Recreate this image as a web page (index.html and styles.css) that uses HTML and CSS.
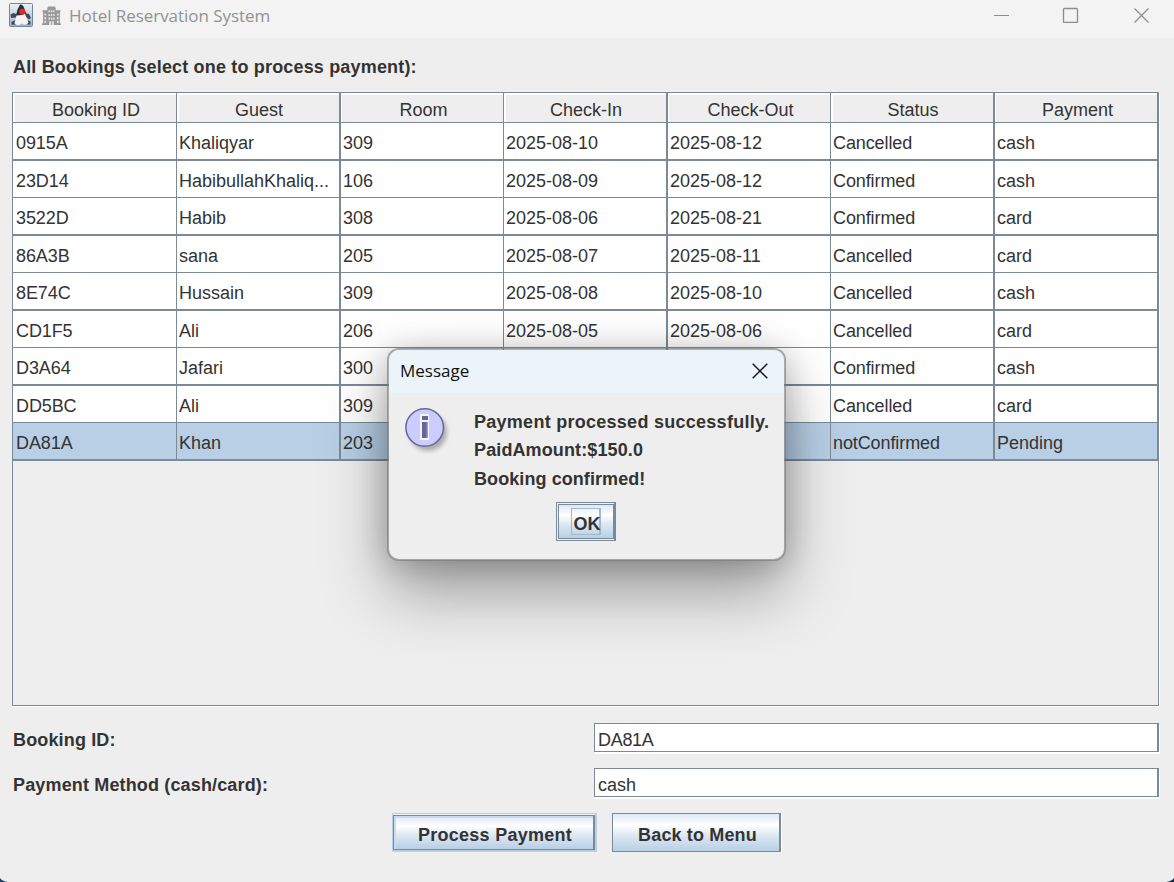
FILE: index.html
```html
<!DOCTYPE html>
<html lang="en">
<head>
<meta charset="utf-8">
<title>Hotel Reservation System</title>
<link rel="stylesheet" href="styles.css">
</head>
<body>
<div class="window">
  <header class="titlebar">
    <svg class="java-icon" viewBox="0 0 24 24">
      <defs><linearGradient id="jg" x1="0" y1="0" x2="0" y2="1"><stop offset="0" stop-color="#eef2f6"/><stop offset="1" stop-color="#9db2c8"/></linearGradient></defs>
      <rect x=".5" y=".5" width="23" height="23" rx="1" fill="url(#jg)" stroke="#7088a3"/>
      <path d="M1.500 11.500l3-1.500 4 1.500-1.500 3-5 .5zM16 10l4 1 2 4-2 1.500-4-3zM2.500 19l4-2 1 4.500-5 .3zM18 17l3.500 1.500v3h-4z" fill="#3d4a59"/>
      <path d="M8 11q4-2.500 8 0l3.500 8.500q-1 2.300-4.500 2.300l-2-1.300-3 1.500q-4 0-4.500-2z" fill="#f3f3f3"/>
      <path d="M11 1.500q2-.5 3.500 2L17 10l-4 2-6 .5q1-6 4-11z" fill="#2a2d33"/>
      <circle cx="13.200" cy="8.800" r="3" fill="#e6261f"/>
    </svg>
    <svg class="hotel-icon" viewBox="0 0 18 18">
      <path d="M6 .5h6l1 1.500v2h4.500v2H17v10.500h1V18H0v-1.500h1V6H.5V4H5V2z" fill="#999"/>
      <path d="M6.200 4h1.300v2H6.200zM8.400 4h1.300v2H8.400zM10.600 4h1.300v2h-1.300zM6.200 7.500h1.300v2H6.200zM8.400 7.500h1.300v2H8.400zM10.600 7.500h1.300v2h-1.300zM6.200 11h1.300v2H6.200zM8.400 11h1.300v2H8.400zM10.600 11h1.300v2h-1.300zM2.300 7h1.500v2H2.300zM2.300 10.500h1.500v2H2.300zM2.300 14h1.500v2H2.300zM14.200 7h1.500v2h-1.500zM14.200 10.500h1.500v2h-1.500zM14.200 14h1.500v2h-1.500zM6.800 14.500h1.800V18H6.800zM9.400 14.500h1.800V18H9.400z" fill="#e6e6e6"/>
    </svg>
    <span class="title">Hotel Reservation System</span>
    <svg class="controls" viewBox="0 0 156 16" fill="none" stroke="#8c8c8c">
      <path d="M0 8.500h15"/><rect x="69.500" y="1.500" width="14" height="14" rx="1" stroke-width="1.300"/><path d="M140.500 1.500l14 14M154.500 1.500l-14 14" stroke-width="1.200"/>
    </svg>
  </header>
  <main class="content">
    <h1 class="heading">All Bookings (select one to process payment):</h1>
    <section class="scroll">
      <table class="table">
        <colgroup><col class="c164"><col class="c164"><col class="c163"><col class="c164"><col class="c163"><col class="c164"><col class="c164"></colgroup>
        <thead><tr><th>Booking ID</th><th>Guest</th><th>Room</th><th>Check-In</th><th>Check-Out</th><th>Status</th><th>Payment</th></tr></thead>
        <tbody>
          <tr><td>0915A</td><td>Khaliqyar</td><td>309</td><td>2025-08-10</td><td>2025-08-12</td><td>Cancelled</td><td>cash</td></tr>
          <tr><td>23D14</td><td>HabibullahKhaliq...</td><td>106</td><td>2025-08-09</td><td>2025-08-12</td><td>Confirmed</td><td>cash</td></tr>
          <tr><td>3522D</td><td>Habib</td><td>308</td><td>2025-08-06</td><td>2025-08-21</td><td>Confirmed</td><td>card</td></tr>
          <tr><td>86A3B</td><td>sana</td><td>205</td><td>2025-08-07</td><td>2025-08-11</td><td>Cancelled</td><td>card</td></tr>
          <tr><td>8E74C</td><td>Hussain</td><td>309</td><td>2025-08-08</td><td>2025-08-10</td><td>Cancelled</td><td>cash</td></tr>
          <tr><td>CD1F5</td><td>Ali</td><td>206</td><td>2025-08-05</td><td>2025-08-06</td><td>Cancelled</td><td>card</td></tr>
          <tr><td>D3A64</td><td>Jafari</td><td>300</td><td></td><td></td><td>Confirmed</td><td>cash</td></tr>
          <tr><td>DD5BC</td><td>Ali</td><td>309</td><td></td><td></td><td>Cancelled</td><td>card</td></tr>
          <tr class="selected"><td>DA81A</td><td>Khan</td><td>203</td><td></td><td></td><td>notConfirmed</td><td>Pending</td></tr>
        </tbody>
      </table>
    </section>
    <form class="form">
      <label for="bid">Booking ID:</label><input id="bid" class="field" value="DA81A">
      <label for="method">Payment Method (cash/card):</label><input id="method" class="field" value="cash">
    </form>
    <div class="actions">
      <button class="btn primary"><span>Process Payment</span></button>
      <button class="btn back">Back to Menu</button>
    </div>
  </main>
  <svg class="corner left" viewBox="0 0 8 4"><path d="M0 0Q2 3 8 4H0z" fill="#24456b"/></svg>
  <svg class="corner right" viewBox="0 0 8 4"><path d="M8 0Q6 3 0 4h8z" fill="#1b2c4b"/></svg>
  <section class="dialog">
    <header class="dialog-bar"><span>Message</span>
      <svg class="close" viewBox="0 0 16 16"><path d="M.7.7l14.600 14.600M15.300.7L.7 15.300" stroke="#111" stroke-width="1.400"/></svg>
    </header>
    <div class="dialog-body">
      <svg class="info" viewBox="0 0 48 48">
        <defs><filter id="sh" x="-30%" y="-30%" width="160%" height="160%"><feGaussianBlur stdDeviation="2"/></filter></defs>
        <circle cx="23" cy="24" r="19" fill="#777" opacity=".55" filter="url(#sh)"/>
        <circle cx="19.700" cy="19.500" r="18.800" fill="#ccf" stroke="#669" stroke-width="1.500"/>
        <path d="M15 6h9v26h-9z" fill="#f4f4ff"/>
        <path d="M17 8h6v4h-6zM17 14h6v16h-6z" fill="#669"/>
        <path d="M21.500 14H23v16h-1.500z" fill="#99c"/>
      </svg>
      <div class="message"><p>Payment processed successfully.</p><p>PaidAmount:$150.0</p><p>Booking confirmed!</p></div>
    </div>
    <button class="ok"><span class="ok-face"><span class="ok-focus">OK</span></span></button>
  </section>
</div>
</body>
</html>
```

FILE: styles.css
```css
* { box-sizing: border-box; }
body { margin: 0; font: 18px/20px "Liberation Sans", Arial, sans-serif; color: #333; overflow: hidden; }
.window { position: relative; width: 1174px; height: 882px; background: #eee; display: flex; flex-direction: column; overflow: hidden; }
.titlebar { height: 38px; background: #f3f3f3; display: flex; align-items: flex-start; padding: 3px 24px 0 9px; flex: none; }
.java-icon { width: 24px; height: 24px; }
.hotel-icon { width: 19px; height: 19px; margin: 3px 0 0 9px; }
.title { font: 17px/24px "Open Sans", "Noto Sans", sans-serif; letter-spacing: -.05px; color: #929292; margin: 1px 0 0 8px; width: 210px; white-space: nowrap; }
.controls { width: 156px; height: 16px; margin: 4px 0 0 auto; }
.content { padding: 19px 14px 0 12px; display: flex; flex-direction: column; }
.heading { font-size: 18px; line-height: 20px; letter-spacing: .17px; margin: 0 0 15px 1px; }
.scroll { width: 1147px; height: 614px; border: 1px solid #7a8a99; box-shadow: 1px 1px 0 #fff; }
.table { width: 1146px; table-layout: fixed; border-collapse: separate; border-spacing: 0; }
.c164 { width: 164px; }
.c163 { width: 163px; }
th, td { padding: 0 0 0 3px; text-align: left; font-weight: 400; border: 0 solid #7a8a99; border-right-width: 1px; border-bottom-width: 1px; white-space: nowrap; }
td { background: #fff; }
th { height: 30px; text-align: center; padding: 4px 0 0 3px; line-height: 20px; box-shadow: inset 2px 2px 0 #fff; }
th:nth-child(even), td:nth-child(even), th:last-child, td:last-child { border-right-width: 2px; }
th:nth-child(even) { padding-left: 2px; }
th:nth-child(odd) { box-shadow: inset 1px 2px 0 #fff; }
th:first-child { box-shadow: inset 2px 2px 0 #fff; }
td:nth-child(n+2) { padding-left: 2px; }
tbody tr { height: 37px; }
tbody tr:nth-child(odd) { height: 38px; }
tbody tr:nth-child(odd) td { border-bottom-width: 2px; }
td, td:nth-child(n+2) { padding-top: 4px; }
td:first-child, td:nth-child(6) { letter-spacing: -.1px; }
.selected td { background: #b8cfe5; }
.form { display: grid; grid-template-columns: 581px 567px; row-gap: 16px; margin-top: 17px; }
.form label { font-weight: 700; letter-spacing: .15px; padding: 7px 0 0 1px; }
.field { height: 29px; font: inherit; letter-spacing: -.3px; color: #333; border: 1px solid #7a8a99; border-right-width: 2px; padding: 6px 0 0 3px; background: #fff; box-shadow: 1px 2px 0 #fff; margin: 0 1px; outline: 0; border-radius: 0; }
#method { letter-spacing: 0; }
.actions { display: flex; padding-left: 380px; gap: 15px; margin-top: 16px; }
.btn { font: 700 18px/20px "Liberation Sans", Arial, sans-serif; letter-spacing: .15px; color: #333; height: 39px; border: 1px solid #7a8a99; border-right-width: 2px; padding: 4px 0 0 3px; background: linear-gradient(#dde8f3 0, #fff 30%, #dde8f3 58%, #b8cfe5 100%); }
.primary { letter-spacing: .27px; width: 205px; border: 1px solid #b8cfe5; border-width: 1px 2px 2px 1px; padding: 1px 0 0; background: #f0f5fa; }
.primary span { display: block; height: 35px; border: 1px solid #7a8a99; border-right-width: 2px; padding: 9px 0 0 3px; background: linear-gradient(#dde8f3 0, #fff 30%, #dde8f3 58%, #b8cfe5 100%); box-shadow: inset 1px 1px 0 1px #c8daeb; }
.back { width: 169px; box-shadow: 1px 0 0 #fff; }
.corner { position: absolute; bottom: 0; width: 8px; height: 4px; }
.left { left: 0; }
.right { right: 0; }
.dialog { position: absolute; left: 387px; top: 348px; width: 399px; height: 213px; border: 2px solid rgba(120,120,120,.62); border-radius: 12px; background: #eee; background-clip: padding-box; box-shadow: 0 32px 64px rgba(0,0,0,.34), 0 3px 30px rgba(0,0,0,.2); display: flex; flex-direction: column; align-items: center; }
.dialog-bar { align-self: stretch; height: 43px; flex: none; background: #ebf4f8; border-radius: 10px 10px 0 0; display: flex; justify-content: space-between; padding: 9px 16px 0 11px; font: 17px/24px "Open Sans", "Noto Sans", sans-serif; color: #111; }
.close { width: 16px; height: 16px; margin-top: 4px; }
.dialog-body { align-self: stretch; display: flex; height: 109px; padding: 15px 0 0 16px; }
.info { width: 48px; height: 48px; flex: none; overflow: visible; }
.message { margin: 0 0 0 21px; font-weight: 700; }
.message p { margin: 0; height: 28px; line-height: 28px; white-space: nowrap; }
.message p:first-child { letter-spacing: .27px; }
.message p:nth-child(2) { letter-spacing: .12px; }
.message p:last-child { margin-top: 1px; letter-spacing: .08px; }
.ok { width: 60px; height: 39px; margin: 0 2px 0 0; border: 1px solid #7a8a99; border-right-width: 2px; padding: 1px 0 1px 1px; background: #e8eff7; font: 700 18px/20px "Liberation Sans", Arial, sans-serif; color: #333; }
.ok-face { display: block; height: 35px; border: 1px solid #7a8a99; background: linear-gradient(#dde8f3 0, #fff 30%, #dde8f3 58%, #b8cfe5 100%); padding: 3px 0 0 12px; }
.ok-focus { display: block; width: 30px; height: 27px; border: 1px solid #a3b8cc; border-right-width: 2px; padding: 5px 0 0 2px; }
```
